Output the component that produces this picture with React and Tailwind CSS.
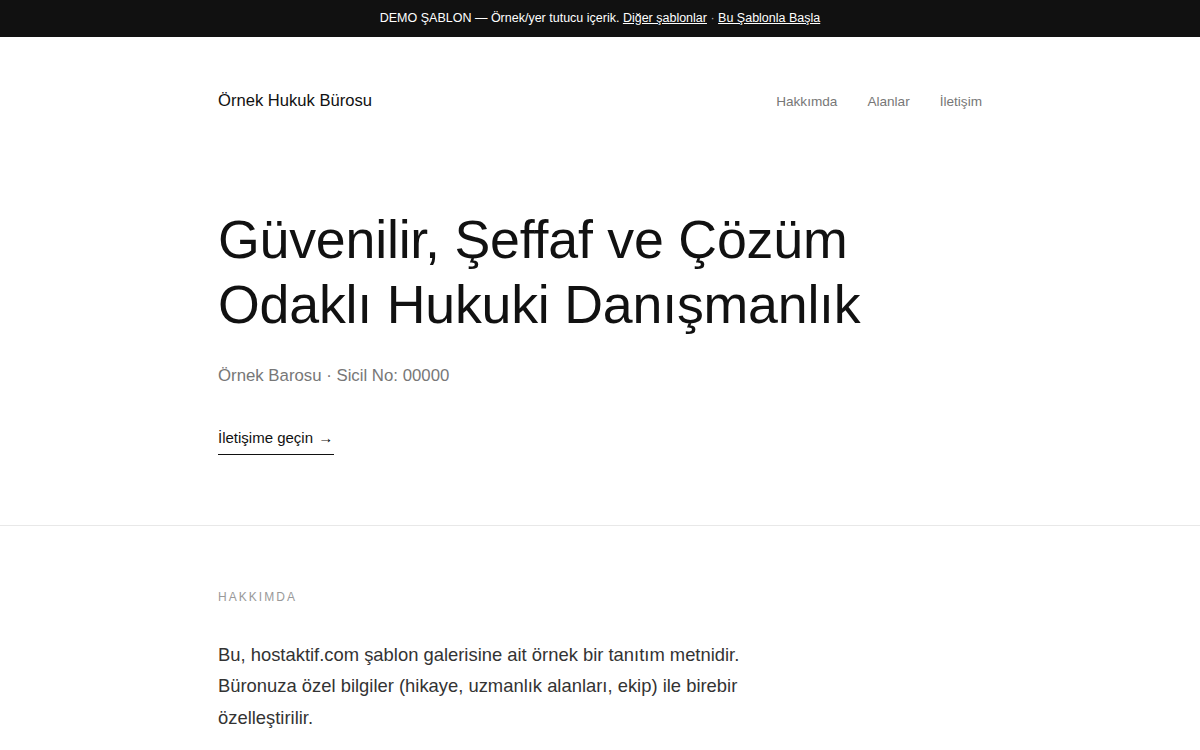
export default function App() {
  return (
    <div className="min-h-screen bg-white text-[#111]" style={{ fontFamily: '"Liberation Sans", Arial, sans-serif' }}>
      {/* demo notice bar */}
      <div className="bg-[#111] text-white text-[12.5px] h-[37px] flex items-center justify-center">
        <span>
          DEMO ŞABLON — Örnek/yer tutucu içerik.{" "}
          <a href="#" className="underline">Diğer şablonlar</a>
          <span className="text-[#aaa]"> · </span>
          <a href="#" className="underline">Bu Şablonla Başla</a>
        </span>
      </div>

      <div className="max-w-[764px] mx-auto">
        {/* header */}
        <header className="flex items-center justify-between pt-[52px]">
          <div className="text-[16.6px] text-[#111]">Örnek Hukuk Bürosu</div>
          <nav className="flex gap-[30px] text-[13.6px] text-[#777] pt-[2px]">
            <a href="#">Hakkımda</a>
            <a href="#">Alanlar</a>
            <a href="#">İletişim</a>
          </nav>
        </header>

        {/* hero */}
        <section className="pt-[93px] pb-[70px]">
          <h1 className="text-[53.7px] leading-[65px] text-[#111] font-normal tracking-[-0.2px]">
            Güvenilir, Şeffaf ve Çözüm
            <br />
            Odaklı Hukuki Danışmanlık
          </h1>
          <p className="mt-[26px] text-[16.8px] text-[#777]">Örnek Barosu · Sicil No: 00000</p>
          <a href="#" className="inline-block mt-[39px] text-[15px] text-[#111] border-b border-[#111] pb-[4px]">
            İletişime geçin <span className="text-[15px] ml-[1px] mr-[1px]">→</span>
          </a>
        </section>
      </div>

      <div className="border-t border-[#e8e8e8]" />

      <div className="max-w-[764px] mx-auto">
        <section className="pt-[62px]">
          <h2 className="text-[12px] tracking-[0.17em] text-[#999] uppercase">Hakkımda</h2>
          <p className="mt-[33px] max-w-[560px] text-[18.4px] leading-[31.5px] text-[#333]">
            Bu, hostaktif.com şablon galerisine ait örnek bir tanıtım metnidir. Büronuza özel bilgiler (hikaye, uzmanlık alanları, ekip) ile birebir özelleştirilir.
          </p>
        </section>
      </div>
    </div>
  );
}
